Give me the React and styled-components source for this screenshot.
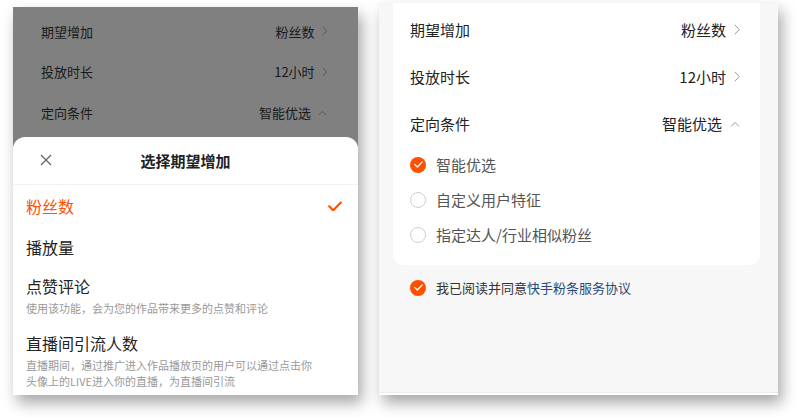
import React from "react";
import styled, { createGlobalStyle } from "styled-components";

const orange = "#ff5000";

const GlobalStyle = createGlobalStyle`
  html, body {
    margin: 0;
    padding: 0;
    background: #ffffff;
    width: 799px;
    height: 417px;
    overflow: hidden;
  }
  body {
    font-family: "Noto Sans CJK SC", "Noto Sans", sans-serif;
  }
`;

const Page = styled.div`
  display: flex;
  align-items: flex-start;
  width: 799px;
  height: 417px;
`;

const LeftShot = styled.div`
  margin: 7px 0 0 13px;
  width: 345px;
  height: 388px;
  display: flex;
  flex-direction: column;
  background: #808080;
  overflow: hidden;
  box-shadow: 4px 8px 14px rgba(0, 0, 0, 0.35);
`;

const DimRows = styled.div`
  display: flex;
  flex-direction: column;
  flex-shrink: 0;
  box-sizing: border-box;
  padding: 4px 31px 0 28px;
  height: 130px;
`;

const DimRow = styled.div`
  height: 40.5px;
  display: flex;
  align-items: center;
  justify-content: space-between;
  font-size: 13px;
  color: #1a1a1a;
`;

const Value = styled.span`
  display: flex;
  align-items: center;
  gap: ${(p) => (p.$small ? 7 : 8)}px;
`;

const Sheet = styled.div`
  flex: 1;
  min-height: 0;
  overflow: hidden;
  background: #fff;
  border-radius: 12px 12px 0 0;
  display: flex;
  flex-direction: column;
`;

const SheetHeader = styled.div`
  height: 47px;
  flex-shrink: 0;
  display: flex;
  align-items: center;
  justify-content: center;
  position: relative;
  border-bottom: 1px solid #f2f2f2;
  font-size: 15px;
  font-weight: 700;
  color: #222;
`;

const Close = styled.svg`
  position: absolute;
  left: 27px;
  top: 17px;
`;

const Option = styled.div`
  display: flex;
  flex-direction: column;
  justify-content: center;
  flex-shrink: 0;
  padding: 0 16px 0 13px;
  min-height: ${(p) => p.$h}px;
`;

const OptionHead = styled.div`
  display: flex;
  align-items: center;
  justify-content: space-between;
  font-size: 16px;
  line-height: 20px;
  color: ${(p) => (p.$active ? orange : "#222")};
`;

const OptionDesc = styled.div`
  font-size: 11px;
  line-height: 16px;
  color: #999;
  margin-top: 4px;
`;

const RightShot = styled.div`
  margin: 3px 0 0 21px;
  width: 399px;
  height: 392px;
  background: #f7f7f7;
  display: flex;
  flex-direction: column;
  box-shadow: 4px 8px 14px rgba(0, 0, 0, 0.35);
`;

const Card = styled.div`
  margin: 0 18px 0 14px;
  background: #fff;
  border-radius: 0 0 10px 10px;
  padding: 3px 20px 13px 17px;
  display: flex;
  flex-direction: column;
`;

const Row = styled.div`
  height: 47px;
  display: flex;
  align-items: center;
  justify-content: space-between;
  font-size: 15px;
  color: #222;
`;

const Choice = styled.div`
  height: 35px;
  display: flex;
  align-items: center;
  gap: 10px;
  font-size: 15px;
  color: #555;
`;

const Radio = styled.span`
  width: 16px;
  height: 16px;
  border-radius: 50%;
  box-sizing: border-box;
  flex-shrink: 0;
  display: flex;
  align-items: center;
  justify-content: center;
  background: ${(p) => (p.$on ? orange : "#fff")};
  border: ${(p) => (p.$on ? "none" : "1px solid #cfcfcf")};
`;

const Agree = styled.div`
  display: flex;
  align-items: center;
  gap: 10px;
  padding: 13px 0 0 31px;
  font-size: 13px;
  color: #333;
`;

const Link = styled.span`
  color: #2a4a76;
`;

const Spacer = styled.div`
  flex: 1;
`;

const BottomBar = styled.div`
  height: 2px;
  background: #fff;
  border-top: 1px solid #ececec;
`;

function Chevron({ up, color = "#999", size = 1 }) {
  if (up) {
    return (
      <svg width={10 * size} height={6 * size} viewBox="0 0 10 6">
        <path d="M1 5.5 L5 1.5 L9 5.5" fill="none" stroke={color} strokeWidth="1" />
      </svg>
    );
  }
  return (
    <svg width={6 * size} height={11 * size} viewBox="0 0 6 11">
      <path d="M0.8 0.8 L5.2 5.5 L0.8 10.2" fill="none" stroke={color} strokeWidth="1" />
    </svg>
  );
}

function Tick({ color = "#fff", w = 9 }) {
  return (
    <svg width={w} height={w * 0.75} viewBox="0 0 12 9">
      <path d="M1 4.5 L4.5 8 L11 1.2" fill="none" stroke={color} strokeWidth="1.8" strokeLinecap="round" strokeLinejoin="round" />
    </svg>
  );
}

const sheetOptions = [
  { title: "粉丝数", active: true, h: 42 },
  { title: "播放量", h: 40 },
  { title: "点赞评论", desc: ["使用该功能，会为您的作品带来更多的点赞和评论"], h: 58 },
  {
    title: "直播间引流人数",
    desc: ["直播期间，通过推广进入作品播放页的用户可以通过点击你", "头像上的LIVE进入你的直播，为直播间引流"],
    h: 72,
  },
];

const settings = [
  { label: "期望增加", value: "粉丝数" },
  { label: "投放时长", value: "12小时" },
  { label: "定向条件", value: "智能优选", up: true },
];

const choices = ["智能优选", "自定义用户特征", "指定达人/行业相似粉丝"];

export default function App() {
  return (
    <Page>
      <GlobalStyle />
      <LeftShot>
        <DimRows>
          {settings.map((s) => (
            <DimRow key={s.label}>
              <span>{s.label}</span>
              <Value $small>
                {s.value}
                <Chevron up={s.up} color="#555" size={0.9} />
              </Value>
            </DimRow>
          ))}
        </DimRows>
        <Sheet>
          <SheetHeader>
            <Close width="12" height="12" viewBox="0 0 12 12">
              <path d="M1 1 L11 11 M11 1 L1 11" stroke="#666" strokeWidth="1.3" />
            </Close>
            选择期望增加
          </SheetHeader>
          {sheetOptions.map((o) => (
            <Option key={o.title} $h={o.h}>
              <OptionHead $active={o.active}>
                {o.title}
                {o.active && <Tick color={orange} w={14} />}
              </OptionHead>
              {o.desc && (
                <OptionDesc>
                  {o.desc.map((d) => (
                    <div key={d}>{d}</div>
                  ))}
                </OptionDesc>
              )}
            </Option>
          ))}
        </Sheet>
      </LeftShot>

      <RightShot>
        <Card>
          {settings.map((s) => (
            <Row key={s.label}>
              <span>{s.label}</span>
              <Value>
                {s.value}
                <Chevron up={s.up} />
              </Value>
            </Row>
          ))}
          {choices.map((c, i) => (
            <Choice key={c}>
              <Radio $on={i === 0}>{i === 0 && <Tick />}</Radio>
              {c}
            </Choice>
          ))}
        </Card>
        <Agree>
          <Radio $on>
            <Tick />
          </Radio>
          <span>
            我已阅读并同意<Link>快手粉条服务协议</Link>
          </span>
        </Agree>
        <Spacer />
        <BottomBar />
      </RightShot>
    </Page>
  );
}
